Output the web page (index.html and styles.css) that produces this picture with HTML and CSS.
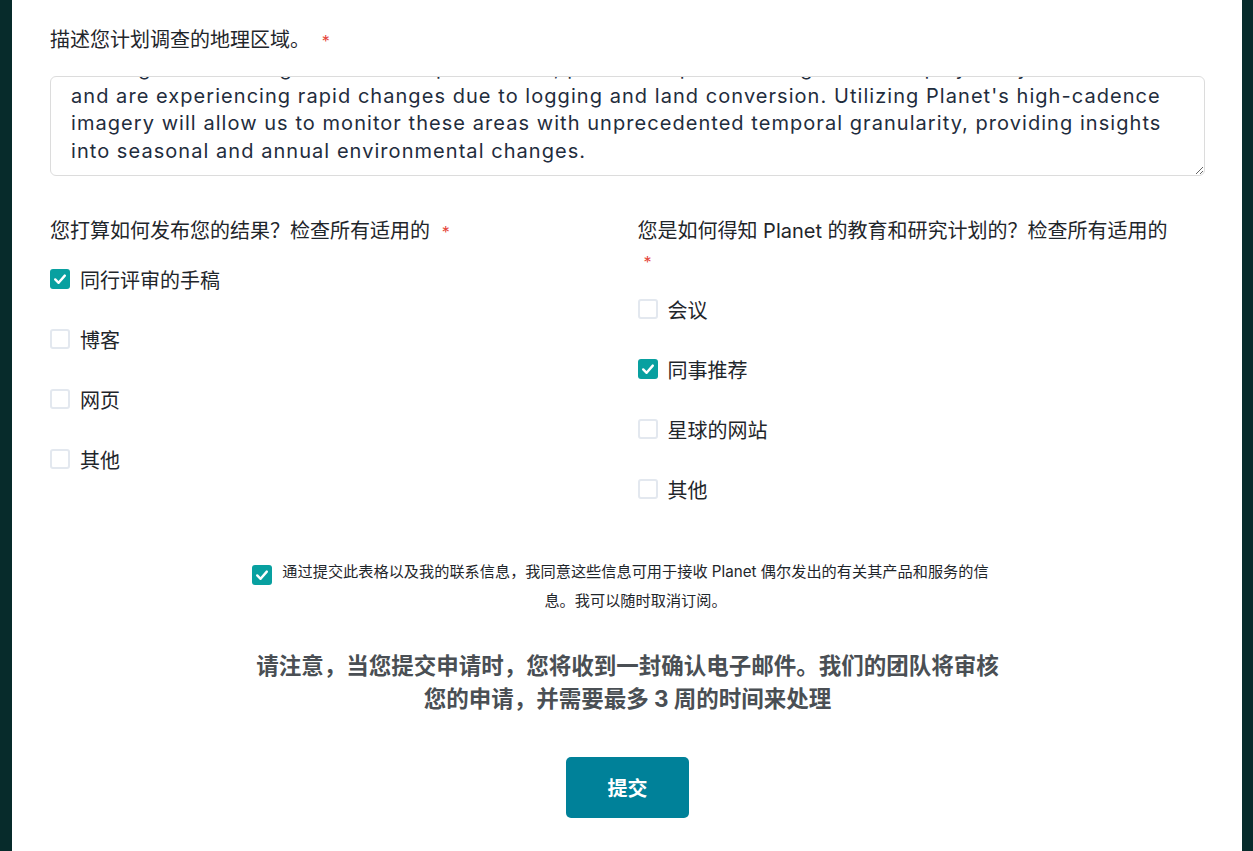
FILE: index.html
```html
<!DOCTYPE html>
<html lang="zh-CN">
<head>
<meta charset="utf-8">
<title>申请表</title>
<link rel="stylesheet" href="styles.css">
</head>
<body>
<div class="page">
  <form class="card">
    <div class="field-label">描述您计划调查的地理区域。 <span class="req">*</span></div>
    <div class="textarea">
      <div class="ta-text">The region hosts large tracts of tropical forest, peat swamps and mangroves that play a key role in<br>and are experiencing rapid changes due to logging and land conversion. Utilizing Planet's high-cadence<br>imagery will allow us to monitor these areas with unprecedented temporal granularity, providing insights<br>into seasonal and annual environmental changes.</div>
    </div>

    <div class="questions">
      <div class="question">
        <div class="q-label">您打算如何发布您的结果？检查所有适用的 <span class="req">*</span></div>
        <div class="options">
          <label class="option"><span class="box checked"><svg viewBox="0 0 20 20" width="20" height="20"><path d="M5.2 10.4 L8.6 13.8 L14.8 6.6" fill="none" stroke="#fff" stroke-width="2.4" stroke-linecap="round" stroke-linejoin="round"/></svg></span>同行评审的手稿</label>
          <label class="option"><span class="box"></span>博客</label>
          <label class="option"><span class="box"></span>网页</label>
          <label class="option"><span class="box"></span>其他</label>
        </div>
      </div>
      <div class="question">
        <div class="q-label">您是如何得知 Planet 的教育和研究计划的？检查所有适用的 <span class="req">*</span></div>
        <div class="options">
          <label class="option"><span class="box"></span>会议</label>
          <label class="option"><span class="box checked"><svg viewBox="0 0 20 20" width="20" height="20"><path d="M5.2 10.4 L8.6 13.8 L14.8 6.6" fill="none" stroke="#fff" stroke-width="2.4" stroke-linecap="round" stroke-linejoin="round"/></svg></span>同事推荐</label>
          <label class="option"><span class="box"></span>星球的网站</label>
          <label class="option"><span class="box"></span>其他</label>
        </div>
      </div>
    </div>

    <div class="consent-wrap">
      <label class="consent">
        <span class="box checked consent-box"><svg viewBox="0 0 20 20" width="20" height="20"><path d="M5.2 10.4 L8.6 13.8 L14.8 6.6" fill="none" stroke="#fff" stroke-width="2.4" stroke-linecap="round" stroke-linejoin="round"/></svg></span>
        <span class="consent-text">通过提交此表格以及我的联系信息，我同意这些信息可用于接收 Planet 偶尔发出的有关其产品和服务的信息。我可以随时取消订阅。</span>
      </label>
    </div>

    <p class="note">请注意，当您提交申请时，您将收到一封确认电子邮件。我们的团队将审核您的申请，并需要最多 3 周的时间来处理</p>

    <div class="actions">
      <button type="button" class="submit">提交</button>
    </div>
  </form>
</div>
</body>
</html>
```

FILE: styles.css
```css
html, body {
  margin: 0;
  padding: 0;
}

body {
  background: #072b2b;
  font-family: "Inter", "Noto Sans CJK SC", sans-serif;
  color: #1f262b;
}

.page {
  padding: 0 11px 0 12px;
}

.card {
  background: #ffffff;
  padding: 25px 37px 60px 38px;
  min-height: 900px;
  box-sizing: border-box;
}

.field-label,
.q-label {
  font-size: 20px;
  line-height: 30px;
  color: #1f262b;
}

.req {
  color: #e5463b;
  font-size: 16px;
  margin-left: 6px;
}

.textarea {
  margin-top: 20px;
  height: 100px;
  box-sizing: border-box;
  border: 1px solid #dcdcdc;
  border-radius: 6px;
  padding: 0 20px 10px;
  overflow: hidden;
  resize: vertical;
  display: flex;
  flex-direction: column;
  justify-content: flex-end;
}

.ta-text {
  font-size: 20px;
  line-height: 27.5px;
  letter-spacing: 1.05px;
  color: #1f2d3d;
  white-space: nowrap;
}

.questions {
  margin-top: 40px;
  display: grid;
  grid-template-columns: 1fr 1fr;
  column-gap: 20px;
}

.question {
  padding-right: 28px;
}

.options {
  margin-top: 18px;
  display: flex;
  flex-direction: column;
  gap: 32px;
}

.option {
  display: flex;
  align-items: center;
  gap: 10px;
  height: 28px;
  font-size: 20px;
  color: #1f262b;
}

.box {
  flex: none;
  width: 20px;
  height: 20px;
  box-sizing: border-box;
  border: 2px solid #e3e8ef;
  border-radius: 3px;
  background: #fff;
  display: inline-flex;
}

.box.checked {
  border: none;
  background: #08a0a0;
}

.box svg {
  display: block;
}

.consent-wrap {
  margin-top: 54px;
  display: flex;
  justify-content: center;
  padding-right: 13px;
}

.consent {
  display: flex;
  align-items: flex-start;
  gap: 9px;
  width: 738px;
}

.consent-box {
  margin-top: 8px;
}

.consent-text {
  font-size: 15.2px;
  line-height: 29px;
  text-align: center;
  color: #1f262b;
}

.note {
  margin: 34px auto 0;
  max-width: 760px;
  text-align: center;
  font-size: 22.5px;
  line-height: 33px;
  font-weight: 700;
  color: #4a4f54;
}

.actions {
  margin-top: 42px;
  display: flex;
  justify-content: center;
}

.submit {
  width: 123px;
  height: 61px;
  border: none;
  border-radius: 5px;
  background: #008199;
  color: #ffffff;
  font-family: "Inter", "Noto Sans CJK SC", sans-serif;
  font-size: 20px;
  font-weight: 700;
}
```
